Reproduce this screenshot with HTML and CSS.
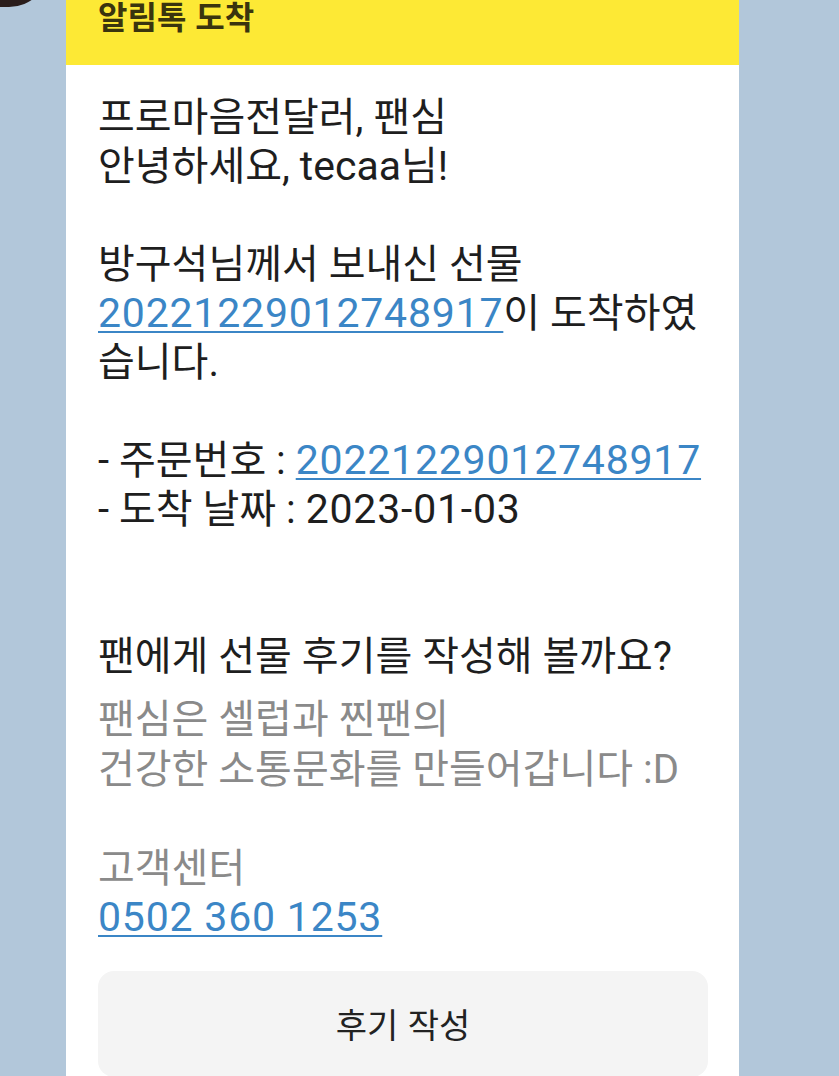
FILE: index.html
```html
<!DOCTYPE html>
<html lang="ko">
<head>
<meta charset="utf-8">
<title>알림톡 도착</title>
<link rel="stylesheet" href="styles.css">
</head>
<body>
<div class="chat">
  <div class="chat-row">
    <div class="avatar"></div>
    <div class="bubble">
      <div class="bubble-head">
        <h1 class="bubble-title">알림톡 도착</h1>
      </div>
      <div class="bubble-body">
        <p class="msg">프로마음전달러, 팬심<br>안녕하세요, <span class="latin">tecaa</span>님!<br><br>방구석님께서 보내신 선물<br><a class="link num" href="#">20221229012748917</a>이 도착하였<br>습니다.<br><br>- 주문번호 : <a class="link num" href="#">20221229012748917</a><br>- 도착 날짜 : <span class="num">2023-01-03</span><br><br><br>팬에게 선물 후기를 작성해 볼까요?</p>
        <p class="msg msg-sub">팬심은 셀럽과 찐팬의<br>건강한 소통문화를 만들어갑니다 :D<br><br>고객센터<br><a class="link num" href="#">0502 360 1253</a></p>
        <button class="action" type="button">후기 작성</button>
      </div>
    </div>
  </div>
</div>
</body>
</html>
```

FILE: styles.css
```css
html, body {
  margin: 0;
  padding: 0;
}

body {
  background: #b2c7da;
  font-family: Roboto, "Noto Sans CJK KR", sans-serif;
  overflow: hidden;
  height: 1076px;
}

.chat {
  display: flex;
  flex-direction: column;
}

.chat-row {
  display: flex;
  align-items: flex-start;
  gap: 17px;
}

.avatar {
  flex: none;
  width: 104px;
  height: 104px;
  margin-left: -55px;
  margin-top: -97px;
  border-radius: 40px;
  background: #2a1d1b;
}

.bubble {
  flex: none;
  width: 673px;
  margin-top: -40px;
  background: #ffffff;
  border-radius: 0 0 14px 14px;
  overflow: hidden;
}

.bubble-head {
  background: #fde935;
  padding: 35px 32px 30px;
}

.bubble-title {
  margin: 0;
  font-family: "Noto Sans CJK KR", sans-serif;
  font-size: 32px;
  font-weight: 700;
  line-height: 40px;
  color: #3a340e;
}

.bubble-body {
  display: flex;
  flex-direction: column;
  padding: 28px 31px 40px 32px;
}

.msg {
  margin: 0;
  font-size: 40px;
  line-height: 49px;
  color: #1e1e1e;
  white-space: nowrap;
}

.msg-sub {
  margin-top: 14px;
  line-height: 49.5px;
  color: #8a8a8a;
}

.latin {
  font-size: 41px;
}

.num {
  font-size: 41px;
  letter-spacing: 0.8px;
}

.link {
  color: #3b86c6;
  text-decoration: underline;
  text-decoration-thickness: 2px;
  text-underline-offset: 4px;
}

.action {
  margin-top: 28px;
  height: 106px;
  border: none;
  border-radius: 16px;
  background: #f4f4f4;
  font-family: "Noto Sans CJK KR", sans-serif;
  font-size: 34px;
  color: #222222;
}
```
